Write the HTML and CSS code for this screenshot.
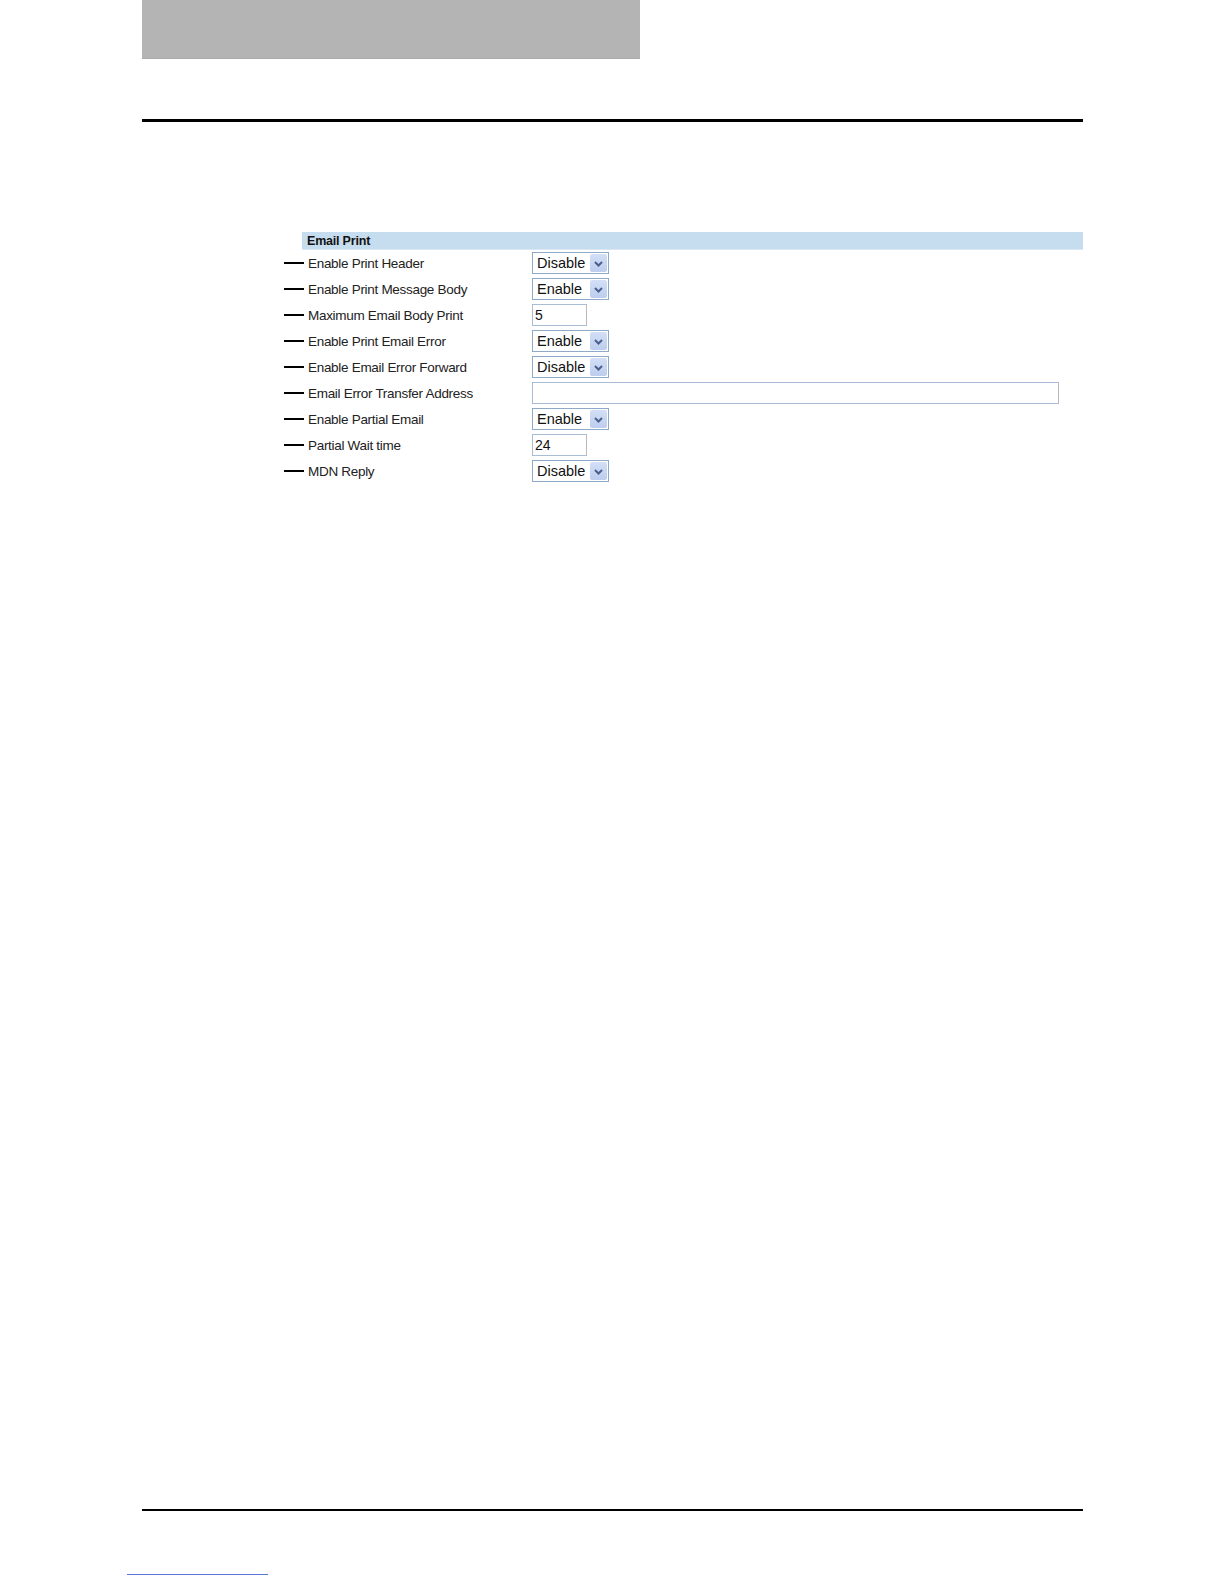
FILE: index.html
```html
<!DOCTYPE html>
<html lang="en">
<head>
<meta charset="utf-8">
<title>Email Print</title>
<link rel="stylesheet" href="styles.css">
</head>
<body>
<div class="page">
  <div class="chapter-tab"></div>
  <div class="top-rule"></div>
  <main class="content">
    <section class="form">
      <div class="section-title">Email Print</div>
      <div class="row"><span class="dash"></span><span class="label">Enable Print Header</span>
        <div class="select"><span class="select-text">Disable</span><span class="select-btn"><svg width="17" height="17" viewBox="0 0 17 17"><path d="M5 7 L8.5 10.5 L12 7" fill="none" stroke="#4a5f8c" stroke-width="2"/></svg></span></div></div>
      <div class="row"><span class="dash"></span><span class="label">Enable Print Message Body</span>
        <div class="select"><span class="select-text">Enable</span><span class="select-btn"><svg width="17" height="17" viewBox="0 0 17 17"><path d="M5 7 L8.5 10.5 L12 7" fill="none" stroke="#4a5f8c" stroke-width="2"/></svg></span></div></div>
      <div class="row"><span class="dash"></span><span class="label">Maximum Email Body Print</span>
        <div class="input short">5</div></div>
      <div class="row"><span class="dash"></span><span class="label">Enable Print Email Error</span>
        <div class="select"><span class="select-text">Enable</span><span class="select-btn"><svg width="17" height="17" viewBox="0 0 17 17"><path d="M5 7 L8.5 10.5 L12 7" fill="none" stroke="#4a5f8c" stroke-width="2"/></svg></span></div></div>
      <div class="row"><span class="dash"></span><span class="label">Enable Email Error Forward</span>
        <div class="select"><span class="select-text">Disable</span><span class="select-btn"><svg width="17" height="17" viewBox="0 0 17 17"><path d="M5 7 L8.5 10.5 L12 7" fill="none" stroke="#4a5f8c" stroke-width="2"/></svg></span></div></div>
      <div class="row"><span class="dash"></span><span class="label">Email Error Transfer Address</span>
        <div class="input long"></div></div>
      <div class="row"><span class="dash"></span><span class="label">Enable Partial Email</span>
        <div class="select"><span class="select-text">Enable</span><span class="select-btn"><svg width="17" height="17" viewBox="0 0 17 17"><path d="M5 7 L8.5 10.5 L12 7" fill="none" stroke="#4a5f8c" stroke-width="2"/></svg></span></div></div>
      <div class="row"><span class="dash"></span><span class="label">Partial Wait time</span>
        <div class="input short">24</div></div>
      <div class="row"><span class="dash"></span><span class="label">MDN Reply</span>
        <div class="select"><span class="select-text">Disable</span><span class="select-btn"><svg width="17" height="17" viewBox="0 0 17 17"><path d="M5 7 L8.5 10.5 L12 7" fill="none" stroke="#4a5f8c" stroke-width="2"/></svg></span></div></div>
    </section>
  </main>
  <div class="bottom-rule"></div>
  <footer class="footer"><span class="footer-link"></span></footer>
</div>
</body>
</html>
```

FILE: styles.css
```css
html, body {
  margin: 0;
  padding: 0;
  background: #ffffff;
}

.page {
  display: flex;
  flex-direction: column;
  height: 1584px;
  padding-left: 142px;
  width: 941px;
  font-family: "Liberation Sans", Arial, sans-serif;
  color: #111;
}

.chapter-tab {
  width: 498px;
  height: 58px;
  background: #b4b4b4;
  border-bottom: 1px solid #aaaaaa;
}

.top-rule {
  margin-top: 60px;
  height: 3px;
  background: #000;
}

.content {
  flex: 1;
}

.form {
  margin-top: 110px;
  margin-left: 142px;
}

.section-title {
  margin-left: 18px;
  height: 17px;
  border-bottom: 1px solid #d9e8f4;
  background: #c6ddef;
  font-weight: bold;
  font-size: 12.5px;
  line-height: 18px;
  padding-left: 5px;
  letter-spacing: -0.2px;
}

.row {
  display: flex;
  align-items: center;
  height: 26px;
}

.dash {
  width: 20px;
  height: 2px;
  background: #000;
  flex: none;
}

.label {
  margin-left: 4px;
  width: 224px;
  flex: none;
  font-size: 13.5px;
  letter-spacing: -0.3px;
  color: #222;
}

.select {
  display: flex;
  align-items: center;
  box-sizing: border-box;
  width: 77px;
  height: 22px;
  border: 1px solid #8fa9c9;
  background: #fff;
}

.select-text {
  flex: 1;
  padding-left: 4px;
  font-size: 14.5px;
  color: #111;
}

.select-btn {
  display: flex;
  width: 17px;
  height: 18px;
  margin-right: 1px;
  border-radius: 2px;
  background: linear-gradient(#d3dff6, #bccdee);
}

.select-btn svg {
  margin-top: 1px;
}

.input {
  box-sizing: border-box;
  height: 22px;
  border: 1px solid #a9bdd6;
  border-right-color: #b9b9c0;
  background: #fff;
  font-size: 14px;
  line-height: 20px;
  padding-left: 2px;
  color: #111;
}

.short {
  width: 55px;
}

.long {
  width: 527px;
}

.bottom-rule {
  height: 2px;
  background: #000;
}

.footer {
  height: 73px;
}

.footer-link {
  display: block;
  margin-top: 63px;
  margin-left: -15px;
  width: 141px;
  height: 1px;
  background: #5b74d6;
}
```
